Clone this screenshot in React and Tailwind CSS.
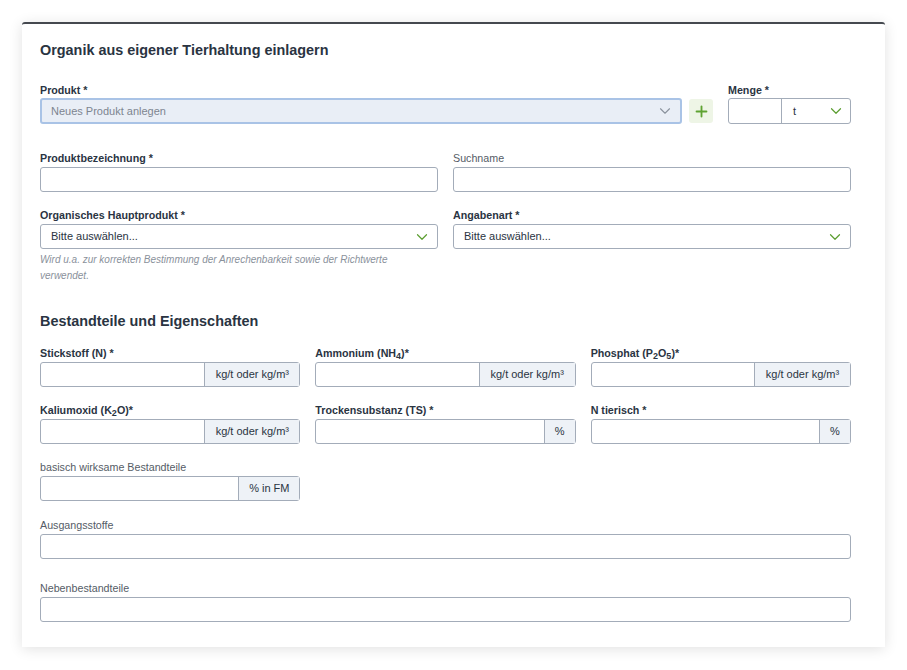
import { ChevronDown, Plus } from 'lucide-react';

const font = { fontFamily: '"Liberation Sans", Arial, sans-serif' };

function Label({ children, bold = true }) {
  return (
    <div
      className={`mb-[2px] h-[14px] text-[10.7px] leading-[14px] ${
        bold ? 'font-bold text-[#2a3442]' : 'font-normal text-[#555c66]'
      }`}
    >
      {children}
    </div>
  );
}

function TextInput() {
  return <div className="h-[25px] rounded-[3px] border border-[#a3acb9] bg-white" />;
}

function Select({ placeholder }) {
  return (
    <div className="flex h-[25px] items-center justify-between rounded-[3px] border border-[#a3acb9] bg-white pl-[10px] pr-[6px]">
      <span className="text-[11px] text-[#2a3442]">{placeholder}</span>
      <ChevronDown className="h-[18px] w-[18px] text-[#5c9e31]" strokeWidth={1.6} />
    </div>
  );
}

function AddonInput({ unit, unitWidth }) {
  return (
    <div className="flex h-[25px] rounded-[3px] border border-[#a3acb9] bg-white">
      <div className="flex-1" />
      <div
        className="flex items-center justify-center border-l border-[#a3acb9] bg-[#eef2f7] text-[11px] text-[#2a3442]"
        style={{ width: unitWidth }}
      >
        {unit}
      </div>
    </div>
  );
}

function Sub({ children }) {
  return <sub className="text-[9px] leading-none">{children}</sub>;
}

export default function App() {
  return (
    <div className="min-h-[670px] bg-white px-[22px] pt-[22px]" style={font}>
      <div className="rounded-t-[3px] border-t-2 border-[#45494f] bg-white pb-[25px] pl-[18px] pr-[34px] pt-[16px] shadow-[0_2px_14px_rgba(0,0,0,0.12)]">
        <h1 className="h-[20px] text-[14.4px] font-bold leading-[20px] text-[#2a3442]">
          Organik aus eigener Tierhaltung einlagern
        </h1>

        <div className="mt-[23px] flex items-end">
          <div className="flex-1">
            <div className="mb-[1px] h-[14px] text-[10.7px] font-bold leading-[14px] text-[#2a3442]">Produkt *</div>
            <div className="flex h-[26px] items-center justify-between rounded-[3px] border-2 border-[#a9c3e6] bg-[#e9eef6] pl-[9px] pr-[6px]">
              <span className="text-[11px] text-[#7d8590]">Neues Produkt anlegen</span>
              <ChevronDown className="h-[18px] w-[18px] text-[#8b939e]" strokeWidth={1.5} />
            </div>
          </div>
          <div className="mb-[1px] ml-[7px] flex h-[24px] w-[24px] items-center justify-center rounded-[3px] bg-[#eef5e6]">
            <Plus className="h-[17px] w-[17px] text-[#5fa332]" strokeWidth={2.6} />
          </div>
          <div className="ml-[15px] w-[123px]">
            <div className="mb-[1px] h-[14px] text-[10.7px] font-bold leading-[14px] text-[#2a3442]">Menge *</div>
            <div className="flex h-[26px] rounded-[3px] border border-[#a3acb9] bg-white">
              <div className="w-[53px] border-r border-[#a3acb9]" />
              <div className="flex flex-1 items-center justify-between pl-[11px] pr-[5px]">
                <span className="text-[11px] text-[#2a3442]">t</span>
                <ChevronDown className="h-[18px] w-[18px] text-[#5c9e31]" strokeWidth={1.6} />
              </div>
            </div>
          </div>
        </div>

        <div className="mt-[27px] grid grid-cols-2 gap-x-[15px]">
          <div>
            <Label>Produktbezeichnung *</Label>
            <TextInput />
          </div>
          <div>
            <Label bold={false}>Suchname</Label>
            <TextInput />
          </div>
        </div>

        <div className="mt-[16px] grid grid-cols-2 gap-x-[15px]">
          <div>
            <Label>Organisches Hauptprodukt *</Label>
            <Select placeholder="Bitte auswählen..." />
            <p className="mt-[3px] text-[10px] italic leading-[16px] text-[#8a919b]">
              Wird u.a. zur korrekten Bestimmung der Anrechenbarkeit sowie der Richtwerte
              <br />
              verwendet.
            </p>
          </div>
          <div>
            <Label>Angabenart *</Label>
            <Select placeholder="Bitte auswählen..." />
          </div>
        </div>

        <h2 className="mt-[27px] h-[20px] text-[14.4px] font-bold leading-[20px] text-[#2a3442]">
          Bestandteile und Eigenschaften
        </h2>

        <div className="mt-[15px] grid grid-cols-3 gap-x-[15px] gap-y-[16px]">
          <div>
            <Label>Stickstoff (N) *</Label>
            <AddonInput unit="kg/t oder kg/m³" unitWidth={95} />
          </div>
          <div>
            <Label>
              Ammonium (NH<Sub>4</Sub>)*
            </Label>
            <AddonInput unit="kg/t oder kg/m³" unitWidth={96} />
          </div>
          <div>
            <Label>
              Phosphat (P<Sub>2</Sub>O<Sub>5</Sub>)*
            </Label>
            <AddonInput unit="kg/t oder kg/m³" unitWidth={96} />
          </div>
          <div>
            <Label>
              Kaliumoxid (K<Sub>2</Sub>O)*
            </Label>
            <AddonInput unit="kg/t oder kg/m³" unitWidth={95} />
          </div>
          <div>
            <Label>Trockensubstanz (TS) *</Label>
            <AddonInput unit="%" unitWidth={31} />
          </div>
          <div>
            <Label>N tierisch *</Label>
            <AddonInput unit="%" unitWidth={31} />
          </div>
          <div>
            <Label bold={false}>basisch wirksame Bestandteile</Label>
            <AddonInput unit="% in FM" unitWidth={61} />
          </div>
        </div>

        <div className="mt-[17px]">
          <Label bold={false}>Ausgangsstoffe</Label>
          <TextInput />
        </div>

        <div className="mt-[22px]">
          <Label bold={false}>Nebenbestandteile</Label>
          <TextInput />
        </div>
      </div>
    </div>
  );
}
